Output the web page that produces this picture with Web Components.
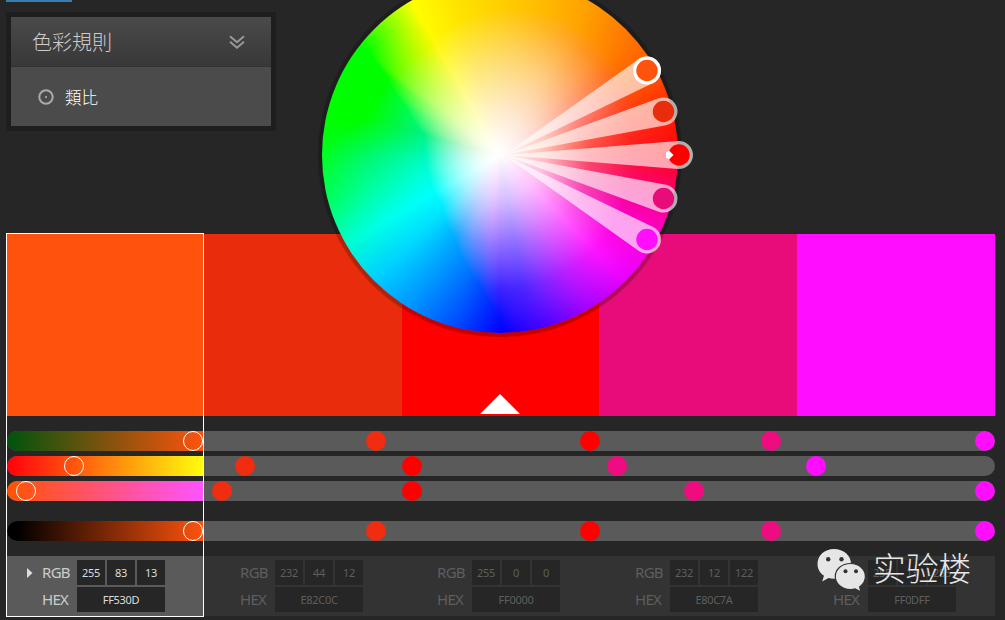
<!DOCTYPE html>
<html lang="zh-Hant">
<head>
<meta charset="utf-8">
<title>色彩規則</title>
<style>
html,body{margin:0;height:620px;overflow:hidden;background:#262626}
body{font-family:"Noto Sans","Noto Sans CJK TC",sans-serif}
</style>
</head>
<body>
<color-app></color-app>
<script>
function define(name, html, setup) {
  const t = document.createElement('template');
  t.innerHTML = html;
  customElements.define(name, class extends HTMLElement {
    constructor() {
      super();
      this.attachShadow({mode: 'open'}).appendChild(t.content.cloneNode(true));
    }
    connectedCallback() { if (setup) setup(this, this.shadowRoot); }
  });
}

define('rule-panel', `
<style>
:host{display:block;box-sizing:border-box;width:270px;height:119px;border:5px solid #1e1e1e;background:#4b4b4b}
header{display:flex;align-items:center;justify-content:space-between;box-sizing:border-box;height:50px;padding:0 26px 0 21px;background:linear-gradient(#4a4a4a,#383838);border-bottom:1px solid #333}
h1{margin:0;font:300 20px/50px "Noto Sans CJK TC",sans-serif;color:#ccc}
.row{display:flex;align-items:center;height:59px;padding-left:27px;gap:11px}
span{font:300 16.500px/24px "Noto Sans CJK TC",sans-serif;color:#fff}
svg{display:block}
</style>
<header><h1><slot name="title"></slot></h1>
<svg width="16" height="14" viewBox="0 0 16 14" fill="none" stroke="#999" stroke-width="2"><path d="M1 1.200 8 7.200 15 1.200M1 6.700 8 12.700 15 6.700"/></svg></header>
<div class="row"><svg width="16" height="16" viewBox="0 0 16 16"><circle cx="8" cy="8" r="6.700" fill="none" stroke="#aaa" stroke-width="2"/><circle cx="8" cy="8" r="1.100" fill="#aaa"/></svg><span><slot></slot></span></div>`);

// Wheel colours by direction (15 degree steps, counter-clockwise from the right);
// each entry lists the rings at 100%, 75%, 50% and 25% of the radius.
const WHEEL = [
 [[255,0,15],[255,20,35],[255,70,80],[255,190,185]],
 [[255,35,0],[255,50,20],[255,105,75],[254,200,180]],
 [[255,90,0],[255,95,15],[255,145,85],[254,212,180]],
 [[255,120,0],[255,140,0],[254,180,90],[254,220,180]],
 [[255,160,0],[255,168,0],[254,203,100],[254,227,185]],
 [[255,185,0],[255,190,15],[254,214,115],[254,232,192]],
 [[255,205,0],[255,208,30],[253,222,115],[254,236,195]],
 [[255,225,0],[255,225,15],[254,232,105],[255,242,190]],
 [[255,255,0],[255,248,0],[255,250,100],[255,252,195]],
 [[170,255,0],[175,255,10],[190,255,105],[218,255,195]],
 [[0,255,0],[0,252,20],[95,253,120],[200,250,210]],
 [[0,255,0],[0,253,15],[0,243,110],[185,245,220]],
 [[0,255,30],[0,248,105],[0,250,165],[170,248,230]],
 [[0,255,95],[0,255,160],[0,255,210],[180,255,245]],
 [[0,255,205],[0,255,235],[0,255,250],[175,255,255]],
 [[0,205,255],[0,215,255],[0,225,255],[170,242,255]],
 [[0,145,255],[0,160,255],[30,175,255],[178,222,255]],
 [[0,75,255],[0,105,255],[75,140,255],[180,205,255]],
 [[5,0,255],[25,35,255],[105,110,255],[198,190,255]],
 [[75,0,255],[105,40,255],[160,110,255],[220,190,255]],
 [[165,0,255],[190,30,255],[215,105,255],[240,190,255]],
 [[230,0,255],[255,20,255],[255,100,255],[255,190,255]],
 [[255,0,220],[252,0,215],[250,75,220],[255,190,240]],
 [[248,0,135],[250,0,140],[245,65,150],[255,190,215]]
];
// Radius (by angle) at which the red and the blue channel run out.
const RED_END = [[142,166],[145,140],[153,106],[165,78],[180,74],[200,74],[221,77],[242,96],[261,131],[270,163],[276,185]];
const BLUE_END = [[10,150],[26,148],[41,146],[62,152],[90,147],[111,139],[125,129],[136,130],[149,135],[164,138],[180,175]];
const HANDLES = [[647,70.5,'#ff530d',1],[663.5,111.5,'#e82c0c'],[679,155,'#ff0000'],[663.5,198.5,'#e80c7a'],[647,239.5,'#ff0dff']];

define('color-wheel', `
<style>
:host{display:block;position:absolute;left:318px;top:-27px;width:380px;height:366px}
canvas,svg{position:absolute;left:0;top:0}
canvas{left:4px;top:4px;border-radius:50%;box-shadow:0 0 1px 4px rgba(0,0,0,.23)}
</style>
<canvas width="356" height="356"></canvas>
<svg width="380" height="366" viewBox="318 -27 380 366"></svg>`, (el, root) => {
  const cv = root.querySelector('canvas'), g = cv.getContext('2d');
  const n = 356, R = n / 2, img = g.createImageData(n, n);
  const mix = (a, b, t) => a + (b - a) * t;
  const clamp = t => Math.max(0, Math.min(1, t));
  const ring = (dir, r) => r === 0 ? [255, 255, 255] : WHEEL[dir % 24][4 - r];
  const along = (tab, a) => {
    if (a <= tab[0][0]) return tab[0][1];
    for (let k = 1; k < tab.length; k++) if (a <= tab[k][0])
      return mix(tab[k - 1][1], tab[k][1], (a - tab[k - 1][0]) / (tab[k][0] - tab[k - 1][0]));
    return tab[tab.length - 1][1];
  };
  for (let y = 0; y < n; y++) for (let x = 0; x < n; x++) {
    const dx = x + .5 - R, dy = R - y - .5, r = Math.hypot(dx, dy);
    const rr = Math.min(3.9999, r / R * 4);
    let a = Math.atan2(dy, dx) * 12 / Math.PI; if (a < 0) a += 24;
    const deg = a * 15;
    const d = Math.floor(a), f = a - d, r0 = Math.floor(rr), q = rr - r0, i = (y * n + x) * 4;
    const A = ring(d, r0), B = ring(d + 1, r0), C = ring(d, r0 + 1), D = ring(d + 1, r0 + 1), c = [0, 0, 0];
    for (let k = 0; k < 3; k++) c[k] = mix(mix(A[k], B[k], f), mix(C[k], D[k], f), q);
    if (deg > 120 && deg < 285) {
      const v = 255 * (1 - Math.pow(Math.min(1, r / along(RED_END, deg)), 2));
      if (deg < 142) c[0] = mix(255, v, (deg - 120) / 22);
      else c[0] = mix(v, c[0], clamp((deg - 262) / 18));
    }
    if (deg > 10 && deg < 180) {
      const v = 255 * (1 - Math.pow(Math.min(1, r / along(BLUE_END, deg)), 1.3));
      c[2] = mix(c[2], v, Math.min(clamp((deg - 10) / 16), clamp((180 - deg) / 15)));
    }
    img.data[i] = c[0]; img.data[i + 1] = c[1]; img.data[i + 2] = c[2]; img.data[i + 3] = 255;
  }
  g.putImageData(img, 0, 0);
  let s = '';
  for (const [x, y, c, sel] of HANDLES) {
    const vx = x - 504, vy = y - 155, L = Math.hypot(vx, vy), th = Math.atan2(vy, vx), r = 14;
    const w = Math.acos(r / L), p = th + Math.PI - w, m = th + Math.PI + w;
    s += `<path d="M504 155L${x + r * Math.cos(m)} ${y + r * Math.sin(m)}A${r} ${r} 0 1 1 ${x + r * Math.cos(p)} ${y + r * Math.sin(p)}Z" fill="#fff" fill-opacity=".64"/>`;
    if (sel) s += `<circle cx="${x}" cy="${y}" r="14" fill="#fff"/>`;
    s += `<circle cx="${x}" cy="${y}" r="10.7" fill="${c}"/>`;
  }
  s += '<path d="M666 152.5 669 150.5 673.5 155 669 159.5 666 157.5Z" fill="#fff"/>';
  root.querySelector('svg').innerHTML = s;
});

define('swatch-strip', `
<style>
:host{display:grid;grid-template-columns:197px 198px 197px 198px 198px;height:182px}
i{display:flex;align-items:flex-end;justify-content:center;padding:0 1px 2px 0}
svg{display:block}
</style>
<i style="background:#ff530d"></i><i style="background:#e82c0c"></i><i style="background:#ff0000"><svg width="40" height="20"><path d="M0 20 20 0 40 20Z" fill="#fff"/></svg></i><i style="background:#e80c7a"></i><i style="background:#ff0dff"></i>`);

define('color-slider', `
<style>
:host{display:block;position:relative;height:20px;border-radius:10px;background:#5a5a5a;overflow:hidden}
.g{width:197px;height:20px}
b{position:absolute;top:0;width:20px;height:20px;border-radius:50%;box-sizing:border-box}
b.ring{border:1.5px solid #fff}
</style><div class="g"></div>`, (el, root) => {
  root.querySelector('.g').style.background = `linear-gradient(90deg,${el.getAttribute('ramp')})`;
  const cs = ['', '#f02d10', '#ff0000', '#ee0c80', '#ff0dff'];
  el.getAttribute('stops').split(' ').forEach((x, k) => {
    const b = document.createElement('b');
    b.style.left = x - 17 + 'px';
    if (k) b.style.background = cs[k]; else b.className = 'ring';
    root.appendChild(b);
  });
});

define('value-group', `
<style>
:host{display:grid;grid-template-columns:28px 88px;column-gap:7px;grid-template-rows:25px 25px;row-gap:2px;align-items:center;padding:4px 0 4px 35px;height:52px;color:#5e5e5e;position:relative}
:host([active]){background:#5a5a5a;color:#ddd;margin-right:1px}
.l{font-size:15px;letter-spacing:-.7px;line-height:25px;white-space:nowrap}
:host([active]) .l{color:#ccc}
.n{display:grid;grid-template-columns:repeat(3,28px);gap:2px}
.n span,.h{background:#262626;text-align:center;font-size:11px;line-height:25px;height:25px;letter-spacing:-.3px}
svg{display:none;position:absolute;left:20px;top:12px}
:host([active]) svg{display:block}
</style>
<svg width="6" height="10"><path d="M0 0 5.500 5 0 10Z" fill="#ddd"/></svg>
<div class="l">RGB</div><div class="n"></div><div class="l">HEX</div><div class="h"></div>`, (el, root) => {
  for (const v of el.getAttribute('rgb').split(' ')) {
    const s = document.createElement('span'); s.textContent = v; root.querySelector('.n').appendChild(s);
  }
  root.querySelector('.h').textContent = el.getAttribute('hex');
});

define('brand-mark', `
<style>
:host{display:flex;align-items:center;gap:7px;position:absolute;left:817px;top:546px;height:46px;color:#e6e6e6}
span{font:300 33px/46px "Noto Sans CJK SC",sans-serif;letter-spacing:-.4px;padding-bottom:4px}
svg{display:block}
</style>
<svg width="49" height="44" viewBox="0 0 49 44">
<path d="M17 2C7.500 2 .5 8.500 .5 17c0 5 2.500 9 6.500 11.800L5.200 34.400 11.500 31c1.800.5 3.600.8 5.500.8 9.600 0 17-6.600 17-15S26.600 2 17 2Z" fill="#e6e6e6"/>
<path d="M33.500 16.500c-8.700 0-15.200 5.700-15.200 13s6.500 13 15.200 13c1.600 0 3.200-.2 4.600-.6l5.900 3-1.400-5c3.400-2.400 5.800-6.100 5.800-10.400 0-7.300-6.400-13-14.900-13Z" fill="#e6e6e6" stroke="#333" stroke-width="1.200"/>
<g fill="#333"><circle cx="11.200" cy="12.200" r="2.200"/><circle cx="24.500" cy="12.200" r="2.200"/><circle cx="28.500" cy="24.200" r="2"/><circle cx="39" cy="24.200" r="2"/></g></svg>
<span><slot></slot></span>`);

define('color-app', `
<style>
:host{display:block;position:relative;width:1005px;height:620px;overflow:hidden;background:#262626}
.top{display:flex;flex-direction:column;height:234px;padding-left:6px;box-sizing:border-box}
.tab{width:66px;height:2px;background:#3a7cad;margin-bottom:10px}
.board{width:988px;margin-left:7px}
.sliders{display:flex;flex-direction:column;gap:5px;padding:15px 0}
.last{margin-top:15px}
.values{display:grid;grid-template-columns:198px 197px 198px 198px 197px;background:#333;height:60px}
.frame{position:absolute;left:6px;top:233px;width:198px;height:384px;box-sizing:border-box;border:1px solid #fff}
</style>
<div class="top"><div class="tab"></div><rule-panel><span slot="title">色彩規則</span>類比</rule-panel></div>
<div class="board">
<swatch-strip></swatch-strip>
<div class="sliders">
<color-slider ramp="#00530d,#ff530d" stops="193 376 590 771 985"></color-slider>
<color-slider ramp="#ff000d,#ff530d 33%,#ffff0d" stops="74 245 412 617 816"></color-slider>
<color-slider ramp="#ff5300,#ff53ff" stops="26 222 412 694 985"></color-slider>
<color-slider class="last" ramp="#000 5%,#ff530d" stops="193 376 590 771 985"></color-slider>
</div>
<div class="values">
<value-group active rgb="255 83 13" hex="FF530D"></value-group>
<value-group rgb="232 44 12" hex="E82C0C"></value-group>
<value-group rgb="255 0 0" hex="FF0000"></value-group>
<value-group rgb="232 12 122" hex="E80C7A"></value-group>
<value-group rgb="255 13 255" hex="FF0DFF"></value-group>
</div>
</div>
<color-wheel></color-wheel>
<div class="frame"></div>
<brand-mark>实验楼</brand-mark>`);
</script>
</body>
</html>
